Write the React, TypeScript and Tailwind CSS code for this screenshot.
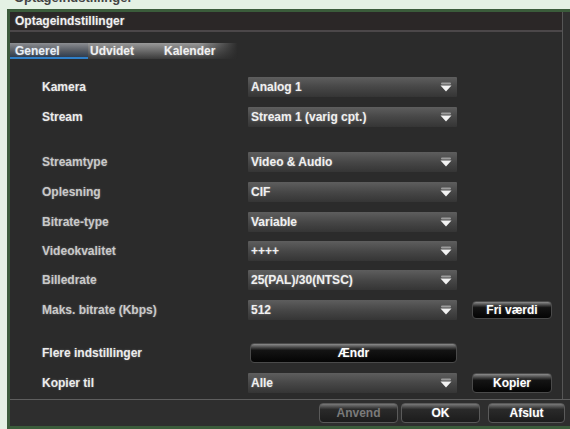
import React from "react";

const glow = "[text-shadow:0_0_2px_rgba(255,255,255,0.35)]";

function Arrow() {
  return (
    <svg width="12" height="10" viewBox="0 0 12 10" className="shrink-0">
      <rect x="1" y="0.5" width="10" height="2" rx="1" fill="#bdbdbd" opacity="0.7" />
      <path d="M0.5 3.5 L11.5 3.5 L6 9.5 Z" fill="#f2f2f2" />
    </svg>
  );
}

function Select({ value }: { value: string }) {
  return (
    <div className="w-[209px] h-[20px] flex items-center justify-between pl-[3px] pr-[5px] bg-gradient-to-b from-[#5e5e5e] via-[#474747] to-[#353535] rounded-[1px]">
      <span className={`text-[12px] font-bold text-[#f0f0f0] leading-none whitespace-nowrap ${glow}`}>{value}</span>
      <Arrow />
    </div>
  );
}

function BlackButton({ label, w, h }: { label: string; w: string; h: string }) {
  return (
    <div
      className={`${w} ${h} rounded-[4px] flex items-center justify-center bg-gradient-to-b from-[#8c8c8c] via-[#141414] via-35% to-[#050505] border border-[#4a4a4a]`}
    >
      <span className={`text-[12px] font-bold text-white leading-none ${glow}`}>{label}</span>
    </div>
  );
}

function Row({
  label,
  mt,
  dim,
  children,
}: {
  label: string;
  mt: string;
  dim?: boolean;
  children: React.ReactNode;
}) {
  return (
    <div className={`flex items-center h-[20px] ${mt}`}>
      <div
        className={`w-[206px] shrink-0 text-[12px] font-bold leading-none ${dim ? "text-[#c9c9c9]" : "text-[#ececec]"} ${glow}`}
      >
        {label}
      </div>
      {children}
    </div>
  );
}

function FooterButton({ label, w, disabled }: { label: string; w: string; disabled?: boolean }) {
  return (
    <div
      className={`${w} h-[20px] rounded-[4px] flex items-center justify-center border border-[#5a5a5a] bg-gradient-to-b from-[#7a7a7a] via-[#2a2a2a] via-30% to-[#1c1c1c]`}
    >
      <span
        className={`text-[12px] font-bold leading-none ${disabled ? "text-[#7a7a7a]" : `text-white ${glow}`}`}
      >
        {label}
      </span>
    </div>
  );
}

export default function App() {
  return (
    <div
      className="w-[570px] h-[429px] bg-[#e4f1e4] overflow-hidden flex flex-col"
      style={{ fontFamily: '"Liberation Sans", Arial, sans-serif' }}
    >
      <div className="h-[9px] overflow-hidden pl-[14px]">
        <div className="text-[13px] font-bold leading-[13px] -mt-[9px] text-[#444]">Optageindstillinger</div>
      </div>
      <div className="ml-[7px] h-[420px] border-l-[3px] border-t-[3px] border-b-[3px] border-[#3b5c3b] bg-[#303030] flex flex-col">
        <div className="flex flex-1">
          <div className="w-[553px] border-r border-[#565656] bg-[#2b2b2b] flex flex-col">
            <div className="h-[18px] bg-[#2b2727] flex items-center pl-[5px]">
              <span className={`text-[12px] font-bold text-[#f0f0f0] leading-none ${glow}`}>Optageindstillinger</span>
            </div>
            <div className="h-[2px] bg-[#4b4749]" />
            <div className="h-[11px]" />
            <div className="h-[16px] w-[228px] flex bg-gradient-to-b from-[#9a9a9a] via-[#6a6a6a] to-[#3a3a3a]">
              <div className="w-[78px] h-full flex items-center pl-[5px] relative bg-gradient-to-b from-[#8c8e92] via-[#555a62] to-[#23344a]">
                <span className={`text-[12px] font-bold text-[#e8eef6] leading-none ${glow}`}>Generel</span>
                <div className="absolute left-0 right-0 bottom-0 h-[2px] bg-[#2f7fc8]" />
              </div>
              <div className="w-[71px] h-full flex items-center pl-[2px]">
                <span className={`text-[12px] font-bold text-[#f0f0f0] leading-none ${glow}`}>Udvidet</span>
              </div>
              <div className="w-[79px] h-full flex items-center pl-[5px] bg-gradient-to-r from-transparent via-transparent to-[#2a2a2a]">
                <span className={`text-[12px] font-bold text-[#f0f0f0] leading-none ${glow}`}>Kalender</span>
              </div>
            </div>
            <div className="flex flex-col pl-[32px]">
              <Row label="Kamera" mt="mt-[18px]">
                <Select value="Analog 1" />
              </Row>
              <Row label="Stream" mt="mt-[10px]">
                <Select value="Stream 1 (varig cpt.)" />
              </Row>
              <Row label="Streamtype" mt="mt-[25px]" dim>
                <Select value="Video & Audio" />
              </Row>
              <Row label="Oplesning" mt="mt-[10px]" dim>
                <Select value="CIF" />
              </Row>
              <Row label="Bitrate-type" mt="mt-[10px]" dim>
                <Select value="Variable" />
              </Row>
              <Row label="Videokvalitet" mt="mt-[9px]" dim>
                <Select value="++++" />
              </Row>
              <Row label="Billedrate" mt="mt-[9px]" dim>
                <Select value="25(PAL)/30(NTSC)" />
              </Row>
              <Row label="Maks. bitrate (Kbps)" mt="mt-[10px]" dim>
                <Select value="512" />
                <div className="ml-[15px]">
                  <BlackButton label="Fri værdi" w="w-[80px]" h="h-[18px]" />
                </div>
              </Row>
              <Row label="Flere indstillinger" mt="mt-[23px]">
                <div className="ml-[2px]">
                  <BlackButton label="Ændr" w="w-[207px]" h="h-[20px]" />
                </div>
              </Row>
              <Row label="Kopier til" mt="mt-[10px]">
                <Select value="Alle" />
                <div className="ml-[15px]">
                  <BlackButton label="Kopier" w="w-[80px]" h="h-[20px]" />
                </div>
              </Row>
            </div>
          </div>
          <div className="flex-1 bg-[#2f2f2f]" />
        </div>
        <div className="h-[1px] bg-[#5e5e5e]" />
        <div className="h-[26px] bg-[#2e2e2e] flex items-center justify-end pr-[5px] gap-[3px]">
          <FooterButton label="Anvend" w="w-[79px]" disabled />
          <FooterButton label="OK" w="w-[79px]" />
          <div className="w-[2px]" />
          <FooterButton label="Afslut" w="w-[77px]" />
        </div>
      </div>
    </div>
  );
}
